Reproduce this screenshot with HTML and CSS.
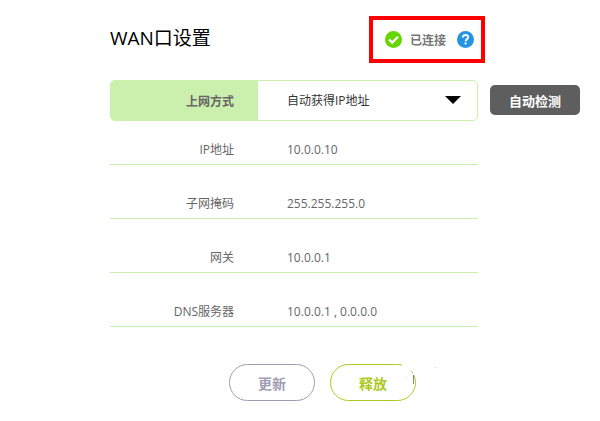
FILE: index.html
```
<!DOCTYPE html>
<html lang="zh-CN">
<head>
    <meta charset="UTF-8">
    <meta name="viewport" content="width=device-width, initial-scale=1.0">
    <title>WAN口设置</title>
    <link rel="stylesheet" href="styles.css">
</head>
<body>

    <main class="page">
        <header class="header">
            <h1 class="title">WAN口设置</h1>
            <div class="status">
                <svg class="icon" viewBox="0 0 17 17" aria-hidden="true">
                    <circle cx="8.5" cy="8.5" r="8.5" fill="#66d600"/>
                    <path d="M4 8.4L7.2 11.6L13 5.8" fill="none" stroke="#fff" stroke-width="2.2"/>
                </svg>
                <span class="status-text">已连接</span>
                <button class="help" type="button" aria-label="帮助">
                    <svg class="icon" viewBox="0 0 17 17" aria-hidden="true">
                        <circle cx="8.5" cy="8.5" r="8.5" fill="#2394e4"/>
                        <path d="M5.9 6.6C5.9 3.2 11.2 3.3 11.2 6.3C11.2 8.2 8.6 8.1 8.6 10.3" fill="none" stroke="#fff" stroke-width="1.9"/>
                        <rect x="7.6" y="11.4" width="2" height="2" fill="#fff"/>
                    </svg>
                </button>
            </div>
        </header>

        <div class="field">
            <label class="field-label" for="wanType">上网方式</label>
            <div class="select-wrap">
                <select class="select" id="wanType" name="wanType">
                    <option>自动获得IP地址</option>
                </select>
                <svg class="arrow" viewBox="0 0 16 8" aria-hidden="true">
                    <path d="M0 0H16L8 8Z" fill="#000"/>
                </svg>
            </div>
        </div>
        <button class="detect" type="button">自动检测</button>

        <dl class="info">
            <div class="row"><dt>IP地址</dt><dd>10.0.0.10</dd></div>
            <div class="row"><dt>子网掩码</dt><dd>255.255.255.0</dd></div>
            <div class="row"><dt>网关</dt><dd>10.0.0.1</dd></div>
            <div class="row"><dt>DNS服务器</dt><dd>10.0.0.1 , 0.0.0.0</dd></div>
        </dl>

        <div class="actions">
            <button class="btn btn-renew" type="button">更新</button>
            <div class="release-wrap">
                <button class="btn btn-release" type="button">释放</button>
                <svg class="mark" viewBox="0 0 36 24" aria-hidden="true">
                    <path d="M0 0H20V12H11V9L0 3Z" fill="#fff"/>
                    <path d="M11.5 12V21" stroke="#6f7fc0" stroke-width="1"/>
                    <rect x="33" y="4" width="1" height="1" fill="#d8d0ee"/>
                    <rect x="3" y="13" width="1" height="1" fill="#e4dcf2"/>
                </svg>
            </div>
        </div>
    </main>

</body>
</html>
```

FILE: styles.css
```
body {
    margin: 0;
    background: #fff;
    color: #666;
    font-family: "Open Sans", "Noto Sans CJK SC", sans-serif;
    font-size: 12px;
}
button, select {
    font-family: inherit;
    cursor: pointer;
}
.page {
    display: grid;
    grid-template-columns: 1fr 90px;
    column-gap: 12px;
    padding: 16px 20px 20px 110px;
}
.header, .field, .info, .actions {
    grid-column: 1;
}
.header {
    display: flex;
    align-items: center;
    justify-content: space-between;
    margin-right: -7px;
    margin-bottom: 17px;
}
.title {
    margin: 0;
    padding-bottom: 4px;
    color: #000;
    font-size: 19px;
    font-weight: normal;
    line-height: 24px;
}
.status {
    display: flex;
    align-items: center;
    box-sizing: border-box;
    height: 47px;
    padding: 0 7px 0 12px;
    border: 4px solid #fe0000;
}
.icon {
    display: block;
    width: 17px;
    height: 17px;
}
.status-text {
    margin: 0 11px 0 8px;
    color: #777;
    font-weight: bold;
}
.help {
    padding: 0;
    border: none;
    background: none;
}
.field {
    display: flex;
    box-sizing: border-box;
    height: 41px;
    border: 1px solid #cbf0ae;
    border-radius: 5px;
    background: #cbf0ae;
}
.field-label {
    width: 123px;
    padding-right: 24px;
    font-weight: bold;
    line-height: 41px;
    text-align: right;
}
.select-wrap {
    position: relative;
    flex: 1;
}
.select {
    appearance: none;
    width: 100%;
    height: 39px;
    padding: 0 40px 0 29px;
    border: none;
    border-radius: 0 4px 4px 0;
    background: #fff;
    color: #333;
    font-size: 12px;
}
.arrow {
    position: absolute;
    top: 15px;
    right: 16px;
    width: 16px;
    height: 8px;
    pointer-events: none;
}
.detect {
    height: 30px;
    margin-top: 5px;
    padding: 0;
    border: none;
    border-radius: 5px;
    background: #5e5e5e;
    color: #fff;
    font-size: 13px;
    font-weight: bold;
}
.info {
    display: grid;
    row-gap: 23px;
    margin: 13px 0 37px;
}
.row {
    display: grid;
    grid-template-columns: 124px 1fr;
    column-gap: 53px;
    height: 30px;
    border-bottom: 1px solid #cbf0ae;
    line-height: 32px;
}
.row dt {
    text-align: right;
}
.row dd {
    margin: 0;
}
.actions {
    display: flex;
    gap: 15px;
    padding-left: 119px;
}
.btn {
    display: block;
    width: 86px;
    height: 37px;
    padding: 0;
    border: 1px solid;
    border-radius: 19px;
    background: #fff;
    font-size: 14px;
    font-weight: bold;
}
.btn-renew {
    border-color: #a09db2;
    color: #a09db2;
}
.btn-release {
    border-color: #adc91e;
    color: #adc91e;
}
.release-wrap {
    position: relative;
}
.mark {
    position: absolute;
    top: -1px;
    left: 72px;
    width: 36px;
    height: 24px;
    pointer-events: none;
}
```
